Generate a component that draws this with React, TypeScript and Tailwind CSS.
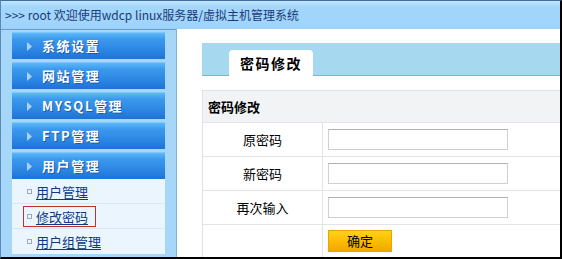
import React from "react";

const menu = ["系统设置", "网站管理", "MYSQL管理", "FTP管理", "用户管理"];
const sub = ["用户管理", "修改密码", "用户组管理"];
const rows = ["原密码", "新密码", "再次输入"];

function Arrow() {
  return (
    <svg width="5" height="9" viewBox="0 0 5 9" className="shrink-0">
      <path d="M0 0 L5 4.5 L0 9 Z" fill="#a9d2f4" />
    </svg>
  );
}

export default function App() {
  return (
    <div
      className="w-[562px] h-[259px] overflow-hidden flex flex-col bg-[#a6d6f8] border-t border-l border-t-[#3f6f9f] border-l-[#5a88b6] border-r-2 border-b-2 border-r-black border-b-black"
      style={{ fontFamily: '"Noto Sans CJK SC", "Liberation Sans", sans-serif' }}
    >
      <div className="h-[29px] shrink-0 flex items-center pl-[4px] text-[12px] text-[#1d3a78] bg-[linear-gradient(#c4e6fd,#a2d6fb_20%,#a0d4fa_90%,#9ccff5)] border-b border-[#6a9cc8]">
        &gt;&gt;&gt; root 欢迎使用wdcp linux服务器/虚拟主机管理系统
      </div>
      <div className="flex flex-1 min-h-0">
        <div className="w-[175px] shrink-0 pl-[11px] pr-[11px] pt-[2px]">
          <div className="flex flex-col gap-[3px]">
            {menu.map((m) => (
              <div
                key={m}
                className="h-[27px] flex items-center gap-[10px] pl-[15px] bg-[linear-gradient(#5cb8f8,#3a98ec_25%,#2a84e2_70%,#1d72d6)] border-t border-[#7cc8fc]"
              >
                <Arrow />
                <span
                  className="text-white font-bold text-[13px] tracking-[1.6px]"
                  style={{ textShadow: "1px 1px 0 #1a5aa8" }}
                >
                  {m}
                </span>
              </div>
            ))}
          </div>
          <div className="bg-[#ebf5fe] flex flex-col">
            {sub.map((s, i) => (
              <div
                key={s}
                className={`h-[25px] flex items-center pl-[15px] ${i < 2 ? "border-b border-[#d6e6f4]" : ""}`}
              >
                <div
                  className={`flex items-center h-[21px] ${i === 1 ? "border border-[#c0302f] -ml-[4px] pl-[3px] pr-[7px]" : ""}`}
                >
                  <span className="w-[5px] h-[5px] border border-[#9aaac0] mr-[4px] shrink-0" />
                  <span className="text-[13px] text-[#0b3b80] underline underline-offset-2 leading-none">
                    {s}
                  </span>
                </div>
              </div>
            ))}
          </div>
        </div>
        <div className="flex-1 -mt-px bg-white border-l border-[#7cb4de] pl-[25px] pt-[14px]">
          <div className="h-[33px] bg-[#a6d9ef] border-b border-[#7fb3cf] flex items-end pl-[27px]">
            <div className="w-[84px] h-[26px] bg-white rounded-t-[4px] flex items-center justify-center text-[14px] font-bold text-black tracking-[1.5px] -mb-px">
              密码修改
            </div>
          </div>
          <div className="mt-[14px] border-l border-t border-[#e0e2e6]">
            <div className="h-[32px] bg-[#f2f3f5] flex items-center pl-[5px] text-[13px] font-bold text-black border-b border-[#e2e4e8]">
              密码修改
            </div>
            {rows.map((r) => (
              <div key={r} className="h-[34px] flex border-b border-[#e4e4e4]">
                <div className="w-[120px] border-r border-[#e4e4e4] flex items-center justify-center text-[13px] text-black">
                  {r}
                </div>
                <div className="flex items-center pl-[5px]">
                  <div className="w-[180px] h-[21px] bg-white border border-[#d0d0d0] border-t-[#b0b0b0]" />
                </div>
              </div>
            ))}
            <div className="h-[34px] flex">
              <div className="w-[120px] border-r border-[#e4e4e4]" />
              <div className="flex items-start pt-[5px] pl-[5px]">
                <div className="w-[64px] h-[22px] flex items-center justify-center text-[13px] text-black bg-[linear-gradient(#ffd21a,#fbb800_60%,#f2a600)] border border-[#e8a400]">
                  确定
                </div>
              </div>
            </div>
          </div>
        </div>
      </div>
    </div>
  );
}
